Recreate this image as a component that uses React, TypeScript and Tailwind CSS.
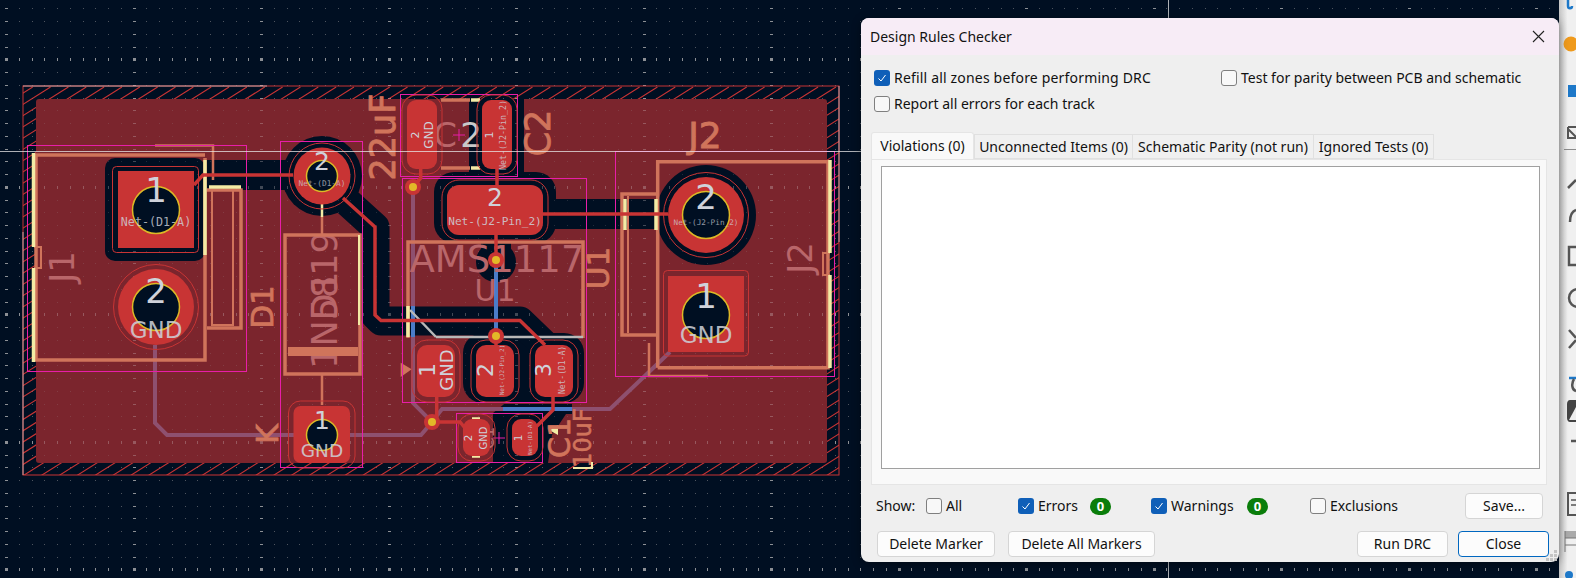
const BG = "#000f22"
const CU = "#7b252d"
const PAD = "#c83434"
const SILK = "#d0745b"
const FADE = "#b9666a"
const CREAM = "#f3eba5"
const PINK = "#e81ea8"
const PURPLE = "#8e506f"
const BLUE = "#4b7cc8"
const LABEL = "#cfd2da"

function gridPaths() {
  let minor = ""
  let major = ""
  for (let i = 0; i < 124; i++) {
    for (let j = 0; j < 46; j++) {
      const x = Math.round(6 + 12.75 * i)
      const y = Math.round(8.3 + 12.75 * j)
      const bigCol = i % 10 === 0
      const bigRow = (j - 4) % 10 === 0
      if (bigCol && bigRow) major += `M${x - 1} ${y - 1}h3v3h-3z`
      else if (bigCol) major += `M${x - 1} ${y}h3v1h-3z`
      else if (bigRow) major += `M${x} ${y - 1}h1v3h-1z`
      else minor += `M${x} ${y}h1v1h-1z`
    }
  }
  return { minor, major }
}

function hatchPath() {
  let d = ""
  for (let x = -620; x < 860; x += 17.85) {
    d += `M${x} 476L${x + 617} 87`
  }
  return d
}

function T({ x, y, s, c = LABEL, r, mono, o, children }: {
  x: number; y: number; s: number; c?: string; r?: boolean; mono?: boolean; o?: number; children: string
}) {
  return (
    <text
      x={x}
      y={y}
      fontSize={s}
      fill={c}
      stroke={c === SILK ? c : "none"}
      strokeWidth={s * 0.025}
      opacity={o}
      textAnchor="middle"
      dominantBaseline="central"
      fontFamily={mono ? "'DejaVu Sans Mono', monospace" : "'DejaVu Sans', sans-serif"}
      transform={r ? `rotate(-90 ${x} ${y})` : undefined}
    >
      {children}
    </text>
  )
}

// rounded pad with its thin clearance outline
function RectPad({ x, y, w, h, r, g = 5, gr }: { x: number; y: number; w: number; h: number; r: number; g?: number; gr?: number }) {
  return (
    <>
      <rect x={x} y={y} width={w} height={h} rx={r} fill={PAD} />
      <rect x={x - g} y={y - g} width={w + g * 2} height={h + g * 2} rx={gr ?? r + g} fill="none" stroke={PAD} strokeWidth={1} />
    </>
  )
}

function Hole({ x, y, r }: { x: number; y: number; r: number }) {
  return <circle cx={x} cy={y} r={r} fill={BG} stroke="#dcb926" strokeWidth={1.5} />
}

function Via({ x, y }: { x: number; y: number }) {
  return (
    <>
      <circle cx={x} cy={y} r={8} fill={PAD} />
      <circle cx={x} cy={y} r={4} fill="#e3b928" />
    </>
  )
}

function Board() {
  const { minor, major } = gridPaths()
  const darkTracks = [
    "M205 175H322",
    "M343 198L375 227V315L381 321H520L548 348",
    "M543 214H706",
    "M496 235V262",
  ]
  return (
    <svg width={1559} height={578} className="absolute top-0 left-0">
      <defs>
        <clipPath id="edge">
          <path clipRule="evenodd" d="M23 86H839V475H23ZM36 99V463H827V99Z" />
        </clipPath>
      </defs>

      <path d={minor} fill="#37434f" />
      <path d={major} fill="#6e747b" />

      <path d={hatchPath()} stroke={PAD} strokeWidth={1.1} clipPath="url(#edge)" fill="none" />
      <rect x={23} y={86} width={816} height={389} fill="none" stroke={PAD} strokeWidth={1} />
      <path d="M23 86H267M839 86V242M23 232V475" stroke="#e8d8d8" strokeWidth={1} fill="none" opacity={0.7} />
      <rect x={36} y={99} width={791} height={364} rx={3} fill={CU} />

      {/* clearance cut outs in the zone */}
      <g fill={BG}>
        <rect x={105} y={158} width={100} height={103} rx={10} />
        <circle cx={322} cy={176} r={40} />
        <circle cx={706} cy={215} r={50} />
        <rect x={434} y={172} width={122} height={71} rx={20} />
        <rect x={469} y={99} width={55} height={80} />
        <rect x={463} y={333} width={121} height={70} rx={20} />
        <circle cx={496} cy={262} r={20} />
        <path d="M503 405H572L552 435L548 463H493V413Z" />
      </g>
      <g fill="none" stroke={BG} strokeLinejoin="round">
        {darkTracks.map((d, i) => <path key={i} d={d} strokeWidth={i === 1 ? 29 : 30} />)}
      </g>
      <rect x={503} y={404} width={69} height={10} fill={BG} />

      <path d={minor} fill="#a8a0a0" opacity={0.2} />
      <path d={major} fill="#d8d0d0" opacity={0.3} />

      {/* back layer tracks */}
      <g fill="none" strokeWidth={4}>
        <path d="M155 345V423L167 435H421L432 422L413 403V187" stroke={PURPLE} />
        <path d="M432 422L442 409H610L670 352" stroke={PURPLE} />
        <path d="M503 409H572" stroke={BLUE} />
        <path d="M496 262V336" stroke={BLUE} />
        <path d="M413 306V337" stroke={BLUE} />
      </g>

      {/* fabrication text under the silk */}
      <T x={325} y={300} s={35} c={FADE} r>1N5819</T>
      <T x={325} y={296} s={35} c={FADE} r>D1</T>
      <T x={62} y={267} s={34} c={FADE} r>J1</T>
      <T x={800} y={258} s={34} c={FADE} r>J2</T>
      <T x={497} y={259} s={37} c={FADE}>AMS1117</T>
      <T x={495} y={290} s={30} c={FADE}>U1</T>
      <T x={445} y={135} s={34} c={FADE}>C</T>
      <T x={471} y={135} s={34} c="#c9c9c9">2</T>
      <T x={488} y={438} s={17} c={FADE} r>C1</T>

      {/* silk and fab outlines */}
      <g fill="none" stroke={SILK} strokeWidth={3.5}>
        <path d="M205 158V360H36V155H205" />
        <path d="M207 190H241V328H207" />
        <path d="M212 190V325H233V190" strokeWidth={2} />
        <rect x={285} y={235} width={75} height={139} />
        <path d="M288 351.5H358" strokeWidth={9} />
        <path d="M322 217V235M322 374V405" strokeWidth={2.5} />
        <path d="M155 145.5H213V180" strokeWidth={2.5} />
        <path d="M441 100H470M441 168H470" />
        <path d="M408 338V242H583V338" />
        <path d="M657.7 367.7V161.7H828V367.7H657.7" />
        <path d="M657 194H622V335H657" />
        <path d="M628 196V333" strokeWidth={2} />
        <path d="M649 343V376H708" strokeWidth={2.5} />
        <path d="M34 247H41V268H34" strokeWidth={2} />
        <path d="M830 253H823V275H830" strokeWidth={2} />
      </g>
      <path d="M436 337H583M410 310L436 337" stroke="#b8b8b8" strokeWidth={2.5} fill="none" />
      <g fill="none" stroke={CREAM} strokeWidth={3.5}>
        <path d="M33.5 153V247M33.5 268V362" />
        <path d="M205 160V255" />
        <path d="M209 187H241" />
        <path d="M322 195V217" strokeWidth={2.5} />
        <path d="M359 235V325" strokeWidth={2} />
        <path d="M408 306V337" />
        <path d="M471 100H480M471 168H480" />
        <path d="M625 199V230M656 199V230" />
        <path d="M830 160V253M830 275V368" />
        <path d="M472 419H480M472 456H480" />
      </g>
      <path d="M400.7 362.7L411.7 369.3L400.7 377Z" fill={SILK} />
      <path d="M549 430L558 425V435Z" fill={CREAM} />

      {/* courtyards */}
      <g fill="none" stroke={PINK} strokeWidth={1}>
        <rect x={27.5} y={145.5} width={219} height={226} />
        <rect x={280.5} y={141.5} width={82} height={326} />
        <rect x={400.5} y={94.5} width={117} height={82} />
        <rect x={402.5} y={178.5} width={184} height={224} />
        <rect x={615.5} y={151.5} width={219} height={225} />
        <rect x={456.5} y={413.5} width={86} height={49} />
        <path d="M453 135H465M459 129V141M493 438H505M499 432V444" />
      </g>

      {/* front tracks */}
      <g fill="none" stroke={PAD} strokeWidth={3.5}>
        <path d="M194 185L203 175H293" />
        <path d="M343 198L375 227V315L381 320.5H520L545 345" />
        <path d="M413 187L420.7 178V169" />
        <path d="M497 169V185M496 235V260M496 336V346" />
        <path d="M543 214H668" />
        <path d="M436.7 397V420M432 422H460L465 428" />
        <path d="M535 428L553 410V397" />
      </g>

      {/* J1 */}
      <rect x={118} y={171} width={76} height={77} fill={PAD} />
      <rect x={112.5} y={166.5} width={86} height={86} rx={4} fill="none" stroke={PAD} strokeWidth={1} />
      <Hole x={156} y={210} r={23.5} />
      <T x={156} y={190} s={34}>1</T>
      <T x={156} y={222} s={11.7} mono o={0.8}>Net-(D1-A)</T>
      <circle cx={156} cy={307} r={38} fill={PAD} />
      <circle cx={156} cy={307} r={42.5} fill="none" stroke={PAD} strokeWidth={1} />
      <Hole x={156} y={307} r={23.5} />
      <T x={156} y={291} s={34}>2</T>
      <T x={156} y={330} s={23} o={0.85}>GND</T>

      {/* D1 */}
      <circle cx={322} cy={176} r={28.5} fill={PAD} />
      <circle cx={322} cy={176} r={33} fill="none" stroke={PAD} strokeWidth={1} />
      <Hole x={322} y={176} r={15.5} />
      <T x={322} y={161} s={25}>2</T>
      <T x={322} y={183.5} s={7.8} mono o={0.7}>Net-(D1-A)</T>
      <RectPad x={293.5} y={406} w={56.5} h={57} r={7} />
      <Hole x={322} y={435} r={15.5} />
      <T x={322} y={420} s={25}>1</T>
      <T x={322} y={450} s={18.5} o={0.85}>GND</T>

      {/* C2 */}
      <RectPad x={407} y={100} w={30} h={69} r={9} />
      <T x={415} y={135} s={11} r>2</T>
      <T x={429} y={135} s={12} r>GND</T>
      <RectPad x={482} y={100} w={30} h={69} r={9} />
      <T x={489} y={135} s={11} r>1</T>
      <T x={503} y={135} s={8.3} mono r o={0.8}>Net-(J2-Pin_2)</T>

      {/* U1 */}
      <RectPad x={447} y={185} w={96} h={50} r={12} />
      <T x={495} y={197} s={25}>2</T>
      <T x={495} y={221.5} s={11.1} mono o={0.85}>Net-(J2-Pin_2)</T>
      <RectPad x={417} y={345} w={38} h={52} r={10} />
      <T x={427} y={370} s={22} r>1</T>
      <T x={446} y={370} s={18} r>GND</T>
      <RectPad x={476} y={345} w={38} h={52} r={10} />
      <T x={485} y={370} s={22} r>2</T>
      <T x={501} y={370} s={6} mono r o={0.8}>Net-(J2-Pin_2)</T>
      <RectPad x={535} y={345} w={38} h={52} r={10} />
      <T x={543} y={370} s={22} r>3</T>
      <T x={562} y={370} s={8} mono r o={0.8}>Net-(D1-A)</T>

      {/* C1 */}
      <RectPad x={463} y={419} w={27} h={37} r={9} />
      <T x={468} y={438} s={10.5} r>2</T>
      <T x={483} y={438} s={10} r>GND</T>
      <RectPad x={512} y={419} w={26} h={37} r={9} />
      <T x={518} y={438} s={10.5} r>1</T>
      <T x={530} y={438} s={5.6} mono r o={0.8}>Net-(D1-A)</T>

      {/* J2 */}
      <circle cx={706} cy={215} r={38} fill={PAD} />
      <circle cx={706} cy={215} r={42.5} fill="none" stroke={PAD} strokeWidth={1} />
      <Hole x={706} y={215} r={23.5} />
      <T x={706} y={197} s={34}>2</T>
      <T x={706} y={222.5} s={7.7} mono o={0.7}>Net-(J2-Pin_2)</T>
      <rect x={668} y={276} width={76} height={76} fill={PAD} />
      <rect x={663.5} y={270.5} width={85} height={85.5} rx={4} fill="none" stroke={PAD} strokeWidth={1} />
      <Hole x={706} y={315} r={23.5} />
      <T x={706} y={296} s={34}>1</T>
      <T x={706} y={335} s={23} o={0.85}>GND</T>

      <Via x={413} y={187} />
      <Via x={496} y={260} />
      <Via x={496} y={336} />
      <Via x={432} y={422} />

      {/* silk references */}
      <T x={383} y={137} s={35} c={SILK} r>22uF</T>
      <T x={538} y={133} s={35} c={SILK} r>C2</T>
      <T x={705} y={135} s={36} c={SILK}>J2</T>
      <T x={598} y={268} s={31} c={SILK} r>U1</T>
      <T x={262} y={307} s={31} c={SILK} r>D1</T>
      <T x={267} y={434} s={30} c={SILK} r>K</T>
      <T x={559} y={438} s={30} c={SILK} r>C1</T>
      <T x={583} y={438} s={24} c={SILK} r>10uF</T>
      <path d="M573 468H592V462" fill="none" stroke={CREAM} strokeWidth={2} />

      {/* crosshair */}
      <path d="M0 151.5H862M1168.5 0V18M1168.5 562V578" stroke="#e8e8e8" strokeWidth={1} opacity={0.75} />
    </svg>
  )
}

function Check({ on, label, className = "" }: { on?: boolean; label: string; className?: string }) {
  return (
    <span className={`flex items-center gap-[4px] ${className}`}>
      {on ? (
        <span className="flex h-4 w-4 items-center justify-center rounded-[3px] bg-[#0f5fb8]">
          <svg width="10" height="10" viewBox="0 0 10 10" fill="none" stroke="#fff" strokeWidth="1">
            <path d="M1.5 5.5L4 8L8.5 2" />
          </svg>
        </span>
      ) : (
        <span className="h-4 w-4 rounded-[3px] border border-[#7f7f7f] bg-[#f8f8f8]" />
      )}
      <span>{label}</span>
    </span>
  )
}

function Btn({ w, children, primary }: { w: string; children: string; primary?: boolean }) {
  return (
    <span
      className={`flex h-[26px] items-center justify-center rounded-[4px] border bg-[#fcfcfc] ${w} ${
        primary ? "border-[#0067c0]" : "border-[#d5d5d5]"
      }`}
    >
      {children}
    </span>
  )
}

function Badge() {
  return (
    <span className="flex h-[17px] w-[21px] items-center justify-center rounded-full bg-[#0a7d0a] text-[13px] font-bold text-white">
      0
    </span>
  )
}

function Dialog() {
  return (
    <div className="absolute top-[18px] left-[861px] flex h-[544px] w-[698px] flex-col rounded-[8px] bg-[#efefef] font-['Noto_Sans',sans-serif] text-[14px] leading-none text-[#111] shadow-[0_2px_10px_rgba(0,0,0,0.4)]">
      <div className="flex h-[37px] items-center justify-between rounded-t-[8px] bg-[#f7ecf6] pr-[14px] pl-[9px]">
        <span>Design Rules Checker</span>
        <svg width="13" height="13" viewBox="0 0 13 13" stroke="#222" strokeWidth="1.1">
          <path d="M1 1L12 12M12 1L1 12" />
        </svg>
      </div>

      <div className="mt-[15px] ml-[13px] flex h-[16px]">
        <Check on label="Refill all zones before performing DRC" className="w-[347px] tracking-[0.18px]" />
        <Check label="Test for parity between PCB and schematic" />
      </div>
      <div className="mt-[10px] ml-[13px] flex h-[16px]">
        <Check label="Report all errors for each track" />
      </div>

      <div className="mt-[20px] ml-[10px] flex h-[27px] items-end">
        <span className="flex h-[27px] w-[103px] items-center justify-center rounded-t-[3px] border border-b-0 border-[#e5e5e5] bg-[#f9f9f9]">Violations (0)</span>
        <span className="flex h-[25px] w-[159px] items-center justify-center border border-[#e0e0e0] bg-[#f0f0f0]">Unconnected Items (0)</span>
        <span className="flex h-[25px] w-[181px] items-center justify-center border border-l-0 border-[#e0e0e0] bg-[#f0f0f0]">Schematic Parity (not run)</span>
        <span className="flex h-[25px] w-[120px] items-center justify-center border border-l-0 border-[#e0e0e0] bg-[#f0f0f0]">Ignored Tests (0)</span>
      </div>
      <div className="ml-[10px] flex h-[326px] w-[676px] border border-[#e5e5e5] bg-[#f9f9f9] pt-[6px] pr-[6px] pb-[15px] pl-[9px]">
        <div className="flex-1 border border-[#a0a0a0] bg-white" />
      </div>

      <div className="mt-[8px] ml-[15px] flex h-[26px] items-center">
        <span className="w-[50px]">Show:</span>
        <Check label="All" className="w-[92px]" />
        <Check on label="Errors" className="w-[72px]" />
        <Badge />
        <span className="w-[40px]" />
        <Check on label="Warnings" className="w-[96px]" />
        <Badge />
        <span className="w-[42px]" />
        <Check label="Exclusions" className="w-[155px]" />
        <Btn w="w-[78px]">Save...</Btn>
      </div>

      <div className="mt-[12px] ml-[16px] flex">
        <Btn w="w-[118px]">Delete Marker</Btn>
        <span className="w-[13px]" />
        <Btn w="w-[147px]">Delete All Markers</Btn>
        <span className="w-[202px]" />
        <Btn w="w-[91px]">Run DRC</Btn>
        <span className="w-[10px]" />
        <Btn w="w-[91px]" primary>Close</Btn>
      </div>

      <svg width="11" height="11" viewBox="0 0 11 11" fill="#c4c4c4" className="absolute right-[2px] bottom-[1px]">
        <path d="M8 0h3v3H8zM4 4h3v3H4zM8 4h3v3H8zM0 8h3v3H0zM4 8h3v3H4zM8 8h3v3H8z" />
      </svg>
    </div>
  )
}

function SideBar() {
  return (
    <div className="h-[578px] w-[17px] shrink-0 bg-gradient-to-r from-[#c4c4c4] via-[#f0f0f0] to-[#f0f0f0]">
      <svg width="17" height="578" fill="none" stroke="#555" strokeWidth="2.5">
        <path d="M9 0V6C9 9 13 9 13 6" stroke="#1e78c8" />
        <circle cx="12" cy="44" r="7.5" fill="#ef9a1c" stroke="none" />
        <rect x="9" y="85" width="8" height="12" fill="#1e78c8" stroke="none" />
        <path d="M9 127H17M9 127V138H17M9 129L17 137" strokeWidth="2" />
        <path d="M5 149.5H17" stroke="#8c8c8c" strokeWidth="1" />
        <path d="M9 188L17 180" />
        <path d="M11 222C11 214 14 211 17 210" />
        <rect x="10" y="247" width="12" height="18" />
        <circle cx="19" cy="298" r="9" />
        <path d="M10 330L17 338M10 348L17 340" />
        <path d="M10 378L17 378" stroke="#1e78c8" />
        <path d="M15 379C12 384 13 390 17 391" />
        <path d="M11 400H17V422H11C9 422 8 420 8 418V404C8 402 9 400 11 400Z" fill="#444" stroke="none" />
        <path d="M17 407L10 420H17Z" fill="#eee" stroke="none" />
        <path d="M12 441H17" />
        <rect x="9" y="493" width="10" height="22" strokeWidth="2" />
        <path d="M12 500H17M12 505H17" strokeWidth="1.5" />
        <rect x="6" y="531" width="14" height="7" fill="#aaa" stroke="none" />
        <path d="M6 531V552M6 538H17M6 545H17" strokeWidth="1" stroke="#777" />
        <circle cx="10" cy="575" r="4" fill="#1e78c8" stroke="none" />
      </svg>
    </div>
  )
}

export default function App() {
  return (
    <div className="flex h-[578px] w-[1576px] overflow-hidden bg-[#000f22]">
      <div className="relative flex-1">
        <Board />
        <Dialog />
      </div>
      <SideBar />
    </div>
  )
}
